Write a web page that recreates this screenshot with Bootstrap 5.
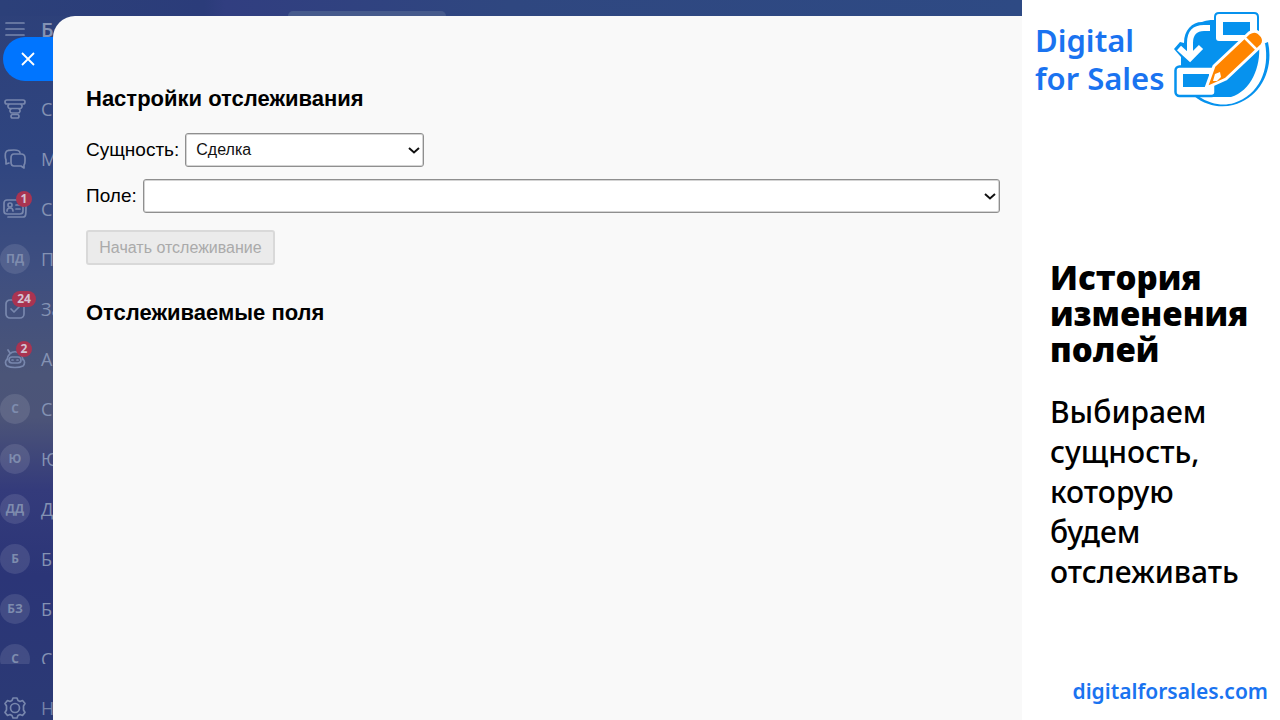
<!DOCTYPE html>
<html lang="ru">
<head>
<meta charset="utf-8">
<meta name="viewport" content="width=device-width, initial-scale=1">
<title>История изменения полей</title>
<link href="https://cdn.jsdelivr.net/npm/bootstrap@5.3.0/dist/css/bootstrap.min.css" rel="stylesheet">
<style>
  body { font-family: "Open Sans", "Noto Sans", sans-serif; background: #fff; color: #000; }
  .workspace { min-width: 0; background: linear-gradient(180deg, #2d4079 0, #2f4580 22%, #3f4f80 38%, #4b5578 52%, #4c5478 58%, #343b7b 68%, #2b3577 80%, #2b3a75 100%); }
  .top-strip { height: 16px; padding-left: 288px; background: linear-gradient(90deg, #2c4079 0, #2b3c7a 20%, #313e80 22%, #2f4780 50%, #2e4a84 100%); }
  .top-search { width: 158px; height: 5px; border-radius: 8px 8px 0 0; background: #465a8c; }
  .rail { width: 53px; color: #8492b3; }
  .rail-head { height: 60px; font-size: 20px; font-weight: 600; margin-bottom: 24px; }
  .rail a { color: inherit; height: 50px; font-size: 18px; font-weight: 500; }
  .rail .rail-foot { height: 56px; padding-top: 32px; color: #7482a8; }
  .glyph { width: 30px; height: 30px; margin-right: 11px; }
  .glyph svg { display: block; width: 30px; height: 30px; fill: none; stroke: #7887ad; stroke-width: 1.7; stroke-linecap: round; stroke-linejoin: round; }
  .initials { border-radius: 50%; background: #ffffff1c; font-size: 12px; font-weight: 700; color: #7e8cae; }
  .count { top: -3px; left: 16px; min-width: 16px; height: 16px; padding: 0 4px; border-radius: 8px; background: #a93451; color: #d4c4d3; font-size: 12px; line-height: 16px; font-weight: 700; text-align: center; }
  .count-wide { left: 12px; min-width: 24px; }
  .close-tab { top: 37px; left: 3px; width: 50px; height: 44px; border-radius: 22px 0 0 22px; background: #0075ff; }
  .panel { margin-top: 16px; padding: 70px 22px 0 33px; min-width: 0; background: #f9f9f9; border-top-left-radius: 22px; font-family: "Liberation Sans", Arial, sans-serif; font-size: 19px; line-height: 24px; }
  .panel h2 { font-size: 22px; line-height: 26px; font-weight: 700; margin: 0; }
  .tracking-form { padding: 21px 0 35px; }
  .tracking-form label { margin-right: 6px; }
  .panel .form-select { height: 34px; padding: 0 32px 0 10px; font-size: 16px; line-height: 32px; color: #111; background-color: #fff; border: 1px solid #8f8f8f; border-radius: 3px; box-shadow: inset 0 0 0 1px #d4d4d4;
    background-image: url("data:image/svg+xml,%3csvg xmlns='http://www.w3.org/2000/svg' viewBox='0 0 12 12'%3e%3cpath d='M1 4 6 8.500l5-4.500' fill='none' stroke='%23111' stroke-width='2'/%3e%3c/svg%3e"); background-size: 12px 12px; background-position: right 3px center; }
  .panel .entity-select { width: 239px; }
  .start-btn { width: 189px; height: 35px; margin-top: 17px; padding: 0; font-size: 16px; color: #aaa; background: #ebebeb; border: 2px solid #d9d9d9; border-radius: 3px; }
  .promo { width: 258px; background: #fff; padding-bottom: 12px; }
  .brand-name { width: 150px; padding: 21px 0 0 13px; font-family: "Noto Sans", sans-serif; font-size: 31px; line-height: 38px; font-weight: 600; color: #1a73f0; }
  .promo-body { padding: 148px 0 0 28px; }
  .promo h1 { font-size: 33px; line-height: 36px; font-weight: 800; }
  .promo-text { font-family: "Noto Sans", sans-serif; font-size: 30px; line-height: 40px; font-weight: 500; }
  .site-link { padding-right: 12px; font-family: "Noto Sans", sans-serif; font-size: 21px; line-height: 34px; font-weight: 600; color: #1a73f0; }
</style>
</head>
<body>
<div class="d-flex vh-100 overflow-hidden">
  <div class="workspace position-relative flex-grow-1 d-flex overflow-hidden">
    <div class="position-absolute top-0 start-0 w-100"><div class="top-strip d-flex align-items-end"><div class="top-search"></div></div></div>
    <nav class="rail position-relative flex-shrink-0 d-flex flex-column overflow-hidden" aria-label="Меню">
      <div class="rail-head d-flex align-items-center flex-shrink-0">
        <span class="glyph flex-shrink-0"><svg viewBox="0 0 30 30"><path d="M6 8h18M6 14h18M6 20h18"/></svg></span><span>Б</span>
      </div>
      <div class="flex-grow-1 overflow-hidden d-flex flex-column">
        <a href="#" class="d-flex align-items-center flex-shrink-0 text-decoration-none"><span class="glyph flex-shrink-0"><svg viewBox="0 0 30 30"><rect x="5" y="6" width="20" height="4" rx="2"/><path d="M9 10.500c-2 1-1 4 1 4h10c2 0 3-3 1-4M11 15c-2 1-1 4 1 4h6c2 0 3-3 1-4"/><rect x="11" y="20.500" width="8" height="3.500" rx="1.700"/></svg></span>С</a>
        <a href="#" class="d-flex align-items-center flex-shrink-0 text-decoration-none"><span class="glyph flex-shrink-0"><svg viewBox="0 0 30 30"><path d="M9 19l-3 1v-4c-1-2-1-7 0-8 1-2 3-2 8-2 4 0 6 1 6 3"/><path d="M14 10h7c3 0 4 1 4 4v3c0 2 0 3-1 4v3l-3-2h-7c-2 0-3-1-3-4v-4c0-3 1-4 3-4z"/></svg></span>М</a>
        <a href="#" class="d-flex align-items-center flex-shrink-0 text-decoration-none"><span class="glyph flex-shrink-0 position-relative"><svg viewBox="0 0 30 30"><rect x="4" y="6" width="19" height="14" rx="3"/><path d="M8 23h15c3 0 3-2 3-12M16 11h4M16 15h4M7 17c0-4 6-4 6 0"/><circle cx="10" cy="11" r="2"/></svg><span class="count position-absolute">1</span></span>С</a>
        <a href="#" class="d-flex align-items-center flex-shrink-0 text-decoration-none"><span class="glyph initials flex-shrink-0 d-flex align-items-center justify-content-center">ПД</span>П</a>
        <a href="#" class="d-flex align-items-center flex-shrink-0 text-decoration-none"><span class="glyph flex-shrink-0 position-relative"><svg viewBox="0 0 30 30"><rect x="6" y="6" width="18" height="18" rx="4"/><path d="M11 15l3 3 6-6"/></svg><span class="count count-wide position-absolute">24</span></span>За</a>
        <a href="#" class="d-flex align-items-center flex-shrink-0 text-decoration-none"><span class="glyph flex-shrink-0 position-relative"><svg viewBox="0 0 30 30"><path d="M10 9L8 6M7 16c1-11 15-11 16 0M7 15c-2 2-2 5 0 7 4 2 12 2 16 0 2-2 2-5 0-7"/><rect x="9" y="13" width="12" height="6" rx="3"/><path d="M12 16h1M17 16h1"/></svg><span class="count position-absolute">2</span></span>А</a>
        <a href="#" class="d-flex align-items-center flex-shrink-0 text-decoration-none"><span class="glyph initials flex-shrink-0 d-flex align-items-center justify-content-center">С</span>С</a>
        <a href="#" class="d-flex align-items-center flex-shrink-0 text-decoration-none"><span class="glyph initials flex-shrink-0 d-flex align-items-center justify-content-center">Ю</span>Ю</a>
        <a href="#" class="d-flex align-items-center flex-shrink-0 text-decoration-none"><span class="glyph initials flex-shrink-0 d-flex align-items-center justify-content-center">ДД</span>Д</a>
        <a href="#" class="d-flex align-items-center flex-shrink-0 text-decoration-none"><span class="glyph initials flex-shrink-0 d-flex align-items-center justify-content-center">Б</span>Б</a>
        <a href="#" class="d-flex align-items-center flex-shrink-0 text-decoration-none"><span class="glyph initials flex-shrink-0 d-flex align-items-center justify-content-center">БЗ</span>Б</a>
        <a href="#" class="d-flex align-items-center flex-shrink-0 text-decoration-none"><span class="glyph initials flex-shrink-0 d-flex align-items-center justify-content-center">С</span>С</a>
      </div>
      <a href="#" class="rail-foot d-flex align-items-center flex-shrink-0 text-decoration-none"><span class="glyph flex-shrink-0"><svg viewBox="0 0 30 30"><path d="M13 5h4l1 2.500 2 1 2.500-1 2.500 3-1.500 2.500v4l1.500 2.500-2.500 3-2.500-1-2 1-1 2.500h-4l-1-2.500-2-1-2.500 1-2.500-3 1.500-2.500v-4l-1.500-2.500 2.500-3 2.500 1 2-1z"/><circle cx="15" cy="15" r="4.500"/></svg></span>Н</a>
    </nav>
    <button type="button" class="close-tab btn border-0 p-0 position-absolute d-flex align-items-center justify-content-center" aria-label="Закрыть"><svg width="14" height="14" viewBox="0 0 14 14" stroke="#fff" stroke-width="1.800"><path d="M1 1l12 12M13 1L1 13"/></svg></button>
    <main class="panel position-relative flex-grow-1">
      <h2>Настройки отслеживания</h2>
      <form class="tracking-form">
        <div class="d-flex align-items-center mb-2 pb-1">
          <label for="entity">Сущность:</label>
          <select id="entity" class="form-select entity-select"><option>Сделка</option></select>
        </div>
        <div class="d-flex align-items-center">
          <label for="field">Поле:</label>
          <select id="field" class="form-select flex-grow-1"><option></option></select>
        </div>
        <button type="submit" class="start-btn d-block" disabled>Начать отслеживание</button>
      </form>
      <h2>Отслеживаемые поля</h2>
    </main>
  </div>
  <aside class="promo flex-shrink-0 d-flex flex-column">
    <div class="d-flex align-items-start">
      <div class="brand-name text-nowrap">Digital<br>for Sales</div>
      <svg class="flex-shrink-0" width="104" height="112" viewBox="1172 0 104 112" aria-hidden="true">
        <path d="M1194 96C1206 106 1221 108 1233 105C1261 98 1274 69 1268 42L1258 46L1216 97Z" fill="#0692ee"/>
        <path d="M1198 96C1211 105 1224 106 1234 103C1259 95 1270 70 1265 43L1256 47L1216 96Z" fill="#fff"/>
        <path d="M1181 66V57L1174 49L1180 42L1184 43C1184 30 1192 22 1202 22C1208 20 1211 20 1214 20V17Q1214 12 1219 12H1254Q1259 12 1259 17V45C1261 67 1251 91 1231 97H1211Z" fill="#0692ee"/>
        <rect x="1216" y="14" width="41" height="27" rx="3" fill="#fff"/><path d="M1223 22h27v13h-27z" fill="#0692ee"/>
        <path d="M1210 28H1204Q1190 28 1190 43V57M1179 48l11 10 11-11" fill="none" stroke="#fff" stroke-width="6"/>
        <rect x="1175.500" y="66.500" width="40" height="29.500" rx="4" fill="#fff" stroke="#0692ee" stroke-width="2.500"/><path d="M1183 74h26v13h-26z" fill="#0692ee"/>
        <path d="M1206 88L1214 66L1249 33Q1256 28 1262 36Q1265 41 1262 45L1226 79Z" fill="#ff8500" stroke="#fff" stroke-width="3" stroke-linejoin="round"/>
        <path d="M1244 37l13 13" stroke="#fff" stroke-width="2.500"/><path d="M1213 81l2-7 5-2 1 5-4 4z" fill="#fff"/>
      </svg>
    </div>
    <div class="promo-body">
      <h1 class="mb-0">История<br>изменения<br>полей</h1>
      <p class="promo-text mb-0 pt-4">Выбираем<br>сущность,<br>которую<br>будем<br>отслеживать</p>
    </div>
    <a href="#" class="site-link mt-auto text-decoration-none text-end">digitalforsales.com</a>
  </aside>
</div>
<script src="https://cdn.jsdelivr.net/npm/bootstrap@5.3.0/dist/js/bootstrap.bundle.min.js"></script>
</body>
</html>
